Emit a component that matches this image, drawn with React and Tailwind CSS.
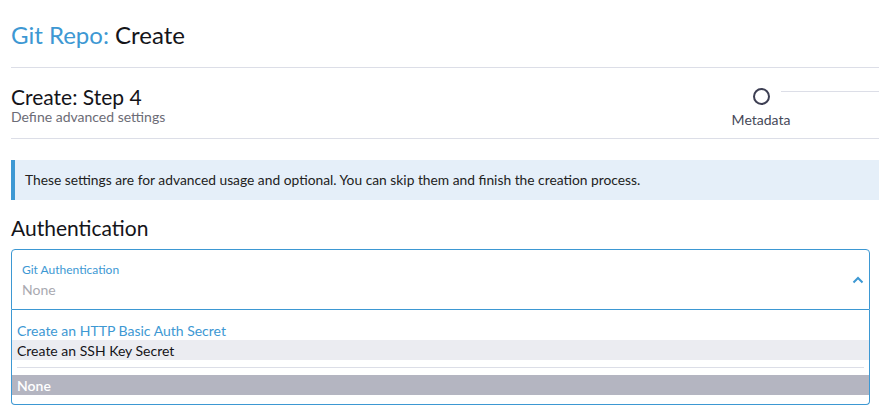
import React from "react";

function Stepper() {
  return (
    <div className="relative w-[168px] h-full">
      <div className="absolute left-[70px] right-0 top-[23px] border-t border-[#dcdee7]" />
      <div className="w-[100px] flex flex-col items-center pt-[20px]">
        <div className="w-[17px] h-[17px] rounded-full border-2 border-[#3d3f53] bg-white" />
        <div className="mt-[6px] text-[14px] leading-[17px] text-[#464858]">Metadata</div>
      </div>
    </div>
  );
}

export default function App() {
  return (
    <div className="min-h-screen bg-white pl-[11px] text-[#141419]" style={{ fontFamily: "Lato, 'Liberation Sans', sans-serif" }}>
      <div className="h-[68px] flex items-center border-b border-[#dcdee7]">
        <h1 className="text-[24px] leading-[29px] pt-[2px]">
          <span className="text-[#3d98d3]">Git Repo:</span> Create
        </h1>
      </div>

      <div className="h-[71px] flex justify-between border-b border-[#dcdee7]">
        <div className="pt-[16px]">
          <h2 className="text-[21px] leading-[25px]">Create: Step 4</h2>
          <div className="text-[14px] leading-[16px] text-[#6c6c76]">Define advanced settings</div>
        </div>
        <Stepper />
      </div>

      <div className="mt-[21px] h-[40px] flex items-center border-l-4 border-[#3d98d3] bg-[#e5eff9] pl-[10px] text-[13.8px] text-[#222]">
        These settings are for advanced usage and optional. You can skip them and finish the creation process.
      </div>

      <h3 className="mt-[15px] text-[21px] leading-[25px]">Authentication</h3>

      <div className="mt-[9px] mr-[9px]">
        <div className="h-[61px] border border-[#3d98d3] rounded-t-[4px] flex items-center justify-between pl-[10px] pr-[5px]">
          <div className="pt-[1px]">
            <div className="text-[12px] leading-[15px] text-[#3d98d3]">Git Authentication</div>
            <div className="mt-[4px] text-[14px] leading-[17px] text-[#a9a9b0]">None</div>
          </div>
          <svg width="12" height="8" viewBox="0 0 12 8" className="mt-[1px]">
            <path d="M1.5 6.5 L6 2 L10.5 6.5" fill="none" stroke="#3d98d3" strokeWidth="2" />
          </svg>
        </div>
        <div className="border-x border-b border-[#3d98d3] rounded-b-[4px] pt-[10px] pb-[9px] text-[14px]">
          <div className="h-[20px] flex items-center px-[5px] pt-[1px] text-[#3d98d3]">Create an HTTP Basic Auth Secret</div>
          <div className="h-[20px] flex items-center px-[5px] bg-[#ebecf1] text-[#141419]">Create an SSH Key Secret</div>
          <div className="mx-[5px] mt-[7px] mb-[7px] border-t border-[#dcdee7]" />
          <div className="h-[20px] flex items-center px-[5px] bg-[#b4b5c1] text-white font-semibold">None</div>
        </div>
      </div>
    </div>
  );
}
